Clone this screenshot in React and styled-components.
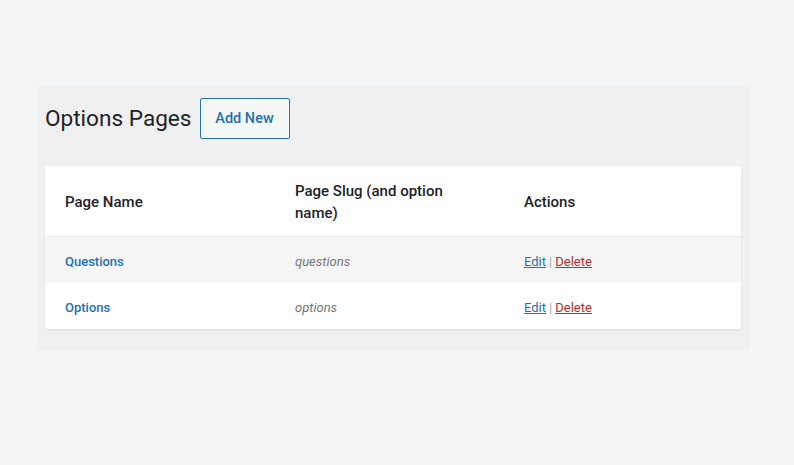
import React from "react"
import styled, {createGlobalStyle} from "styled-components"

const GlobalStyle = createGlobalStyle`
  body {
    margin: 0;
    background: #f3f4f6;
    font-family: Roboto, "Liberation Sans", sans-serif;
    color: #1d2327;
  }
`

const Page = styled.div`
  padding: 86px 44px 0 37px;
`

const Panel = styled.div`
  background: #f0f0f1;
  padding: 12px 9px 21px 8px;
`

const Header = styled.div`
  display: flex;
  align-items: center;
  gap: 8px;
  margin-bottom: 27px;
`

const Title = styled.h1`
  margin: 0;
  font-size: 22.6px;
  font-weight: 400;
  color: #1d2327;
`

const AddButton = styled.button`
  height: 41px;
  width: 90px;
  background: #f6f7f7;
  border: 1px solid #2271b1;
  border-radius: 2px;
  color: #2271b1;
  font-family: inherit;
  font-size: 14.5px;
  font-weight: 500;
  cursor: pointer;
`

const Card = styled.div`
  background: #fff;
  border-radius: 4px;
  box-shadow: 0 1px 3px rgba(0, 0, 0, 0.08);
  overflow: hidden;
`

const Row = styled.div`
  display: grid;
  grid-template-columns: 230px 229px 1fr;
  align-items: center;
  height: ${p => (p.head ? "71px" : "46px")};
  padding-top: ${p => (p.head ? "2px" : "3px")};
  box-sizing: border-box;
  background: ${p => (p.shaded ? "#f6f6f6" : "#fff")};
  border-bottom: ${p => (p.head ? "1px solid #ececec" : "none")};
`

const HeadCell = styled.div`
  padding: 0 20px;
  font-size: 15px;
  font-weight: 500;
  line-height: 22px;
  color: #1d2327;
`

const Cell = styled.div`
  padding: 0 20px;
  font-size: 13px;
  line-height: 18px;
`

const NameLink = styled.a`
  color: #2271b1;
  font-weight: 500;
  text-decoration: none;
`

const Slug = styled.span`
  color: #757575;
  font-style: italic;
`

const ActionLink = styled.a`
  color: ${p => (p.danger ? "#b32d2e" : "#2271b1")};
  text-decoration: underline;
`

const Sep = styled.span`
  color: #a7aaad;
  margin: 0 3px;
`

const pages = [
  {name: "Questions", slug: "questions"},
  {name: "Options", slug: "options"},
]

export default function App() {
  return (
    <>
      <GlobalStyle />
      <Page>
        <Panel>
          <Header>
            <Title>Options Pages</Title>
            <AddButton>Add New</AddButton>
          </Header>
          <Card>
            <Row head>
              <HeadCell>Page Name</HeadCell>
              <HeadCell>Page Slug (and option name)</HeadCell>
              <HeadCell>Actions</HeadCell>
            </Row>
            {pages.map((p, i) => (
              <Row key={p.slug} shaded={i % 2 === 0}>
                <Cell><NameLink href="#">{p.name}</NameLink></Cell>
                <Cell><Slug>{p.slug}</Slug></Cell>
                <Cell>
                  <ActionLink href="#">Edit</ActionLink>
                  <Sep>|</Sep>
                  <ActionLink href="#" danger>Delete</ActionLink>
                </Cell>
              </Row>
            ))}
          </Card>
        </Panel>
      </Page>
    </>
  )
}
